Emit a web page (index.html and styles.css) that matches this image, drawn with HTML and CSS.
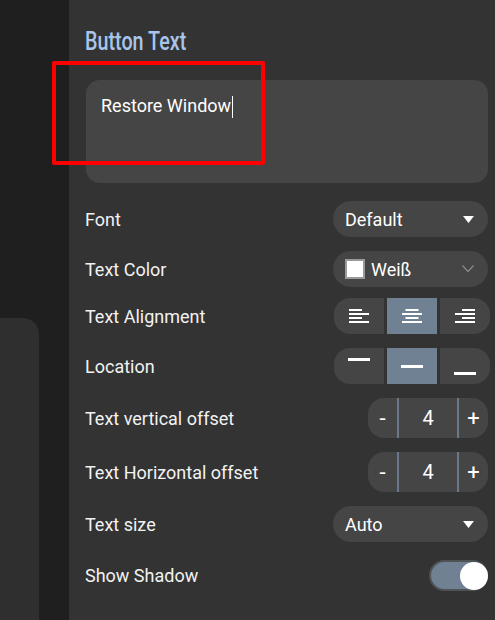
FILE: index.html
```html
<!DOCTYPE html>
<html>
<head>
<meta charset="utf-8">
<link rel="stylesheet" href="styles.css">
</head>
<body>
<div class="app">
  <aside class="sidebar">
    <div class="side-card"></div>
  </aside>
  <main class="panel">
    <h1 class="title"><span class="title-text">Button Text</span></h1>
    <div class="textarea"><span class="value">Restore Window</span><span class="caret"></span></div>

    <div class="rows">
      <div class="row r-font">
        <span class="label">Font</span>
        <div class="select">
          <span>Default</span>
          <svg class="tri" width="11" height="7" viewBox="0 0 11 7"><path d="M0 0H11L5.5 7Z" fill="#fff"/></svg>
        </div>
      </div>

      <div class="row r-color">
        <span class="label">Text Color</span>
        <div class="select">
          <span class="swatch"></span>
          <span class="sel-text">Weiß</span>
          <svg class="chev" width="12" height="8" viewBox="0 0 12 8"><path d="M0.5 0.5L6 6.5L11.5 0.5" fill="none" stroke="#8a8a8a" stroke-width="1.2"/></svg>
        </div>
      </div>

      <div class="row r-align">
        <span class="label">Text Alignment</span>
        <div class="seg">
          <div class="seg-item">
            <svg width="20" height="16" viewBox="0 0 20 16"><g fill="#fff"><rect x="0" y="1" width="13" height="2"/><rect x="0" y="5" width="20" height="2"/><rect x="0" y="9" width="13" height="2"/><rect x="0" y="13" width="20" height="2"/></g></svg>
          </div>
          <div class="seg-item active">
            <svg width="20" height="16" viewBox="0 0 20 16"><g fill="#fff"><rect x="3.5" y="1" width="13" height="2"/><rect x="0" y="5" width="20" height="2"/><rect x="3.5" y="9" width="13" height="2"/><rect x="0" y="13" width="20" height="2"/></g></svg>
          </div>
          <div class="seg-item">
            <svg width="20" height="16" viewBox="0 0 20 16"><g fill="#fff"><rect x="7" y="1" width="13" height="2"/><rect x="0" y="5" width="20" height="2"/><rect x="7" y="9" width="13" height="2"/><rect x="0" y="13" width="20" height="2"/></g></svg>
          </div>
        </div>
      </div>

      <div class="row r-loc">
        <span class="label">Location</span>
        <div class="seg">
          <div class="seg-item">
            <svg width="22" height="20" viewBox="0 0 22 20"><rect x="0" y="2" width="22" height="3" fill="#fff"/></svg>
          </div>
          <div class="seg-item active">
            <svg width="22" height="20" viewBox="0 0 22 20"><rect x="0" y="9" width="22" height="3" fill="#fff"/></svg>
          </div>
          <div class="seg-item">
            <svg width="22" height="20" viewBox="0 0 22 20"><rect x="0" y="16" width="22" height="3" fill="#fff"/></svg>
          </div>
        </div>
      </div>

      <div class="row r-step">
        <span class="label">Text vertical offset</span>
        <div class="stepper">
          <span class="step-btn">-</span>
          <span class="step-val">4</span>
          <span class="step-btn">+</span>
        </div>
      </div>

      <div class="row r-step">
        <span class="label">Text Horizontal offset</span>
        <div class="stepper">
          <span class="step-btn">-</span>
          <span class="step-val">4</span>
          <span class="step-btn">+</span>
        </div>
      </div>

      <div class="row r-size">
        <span class="label">Text size</span>
        <div class="select">
          <span>Auto</span>
          <svg class="tri" width="11" height="7" viewBox="0 0 11 7"><path d="M0 0H11L5.5 7Z" fill="#fff"/></svg>
        </div>
      </div>

      <div class="row r-shadow">
        <span class="label">Show Shadow</span>
        <div class="toggle"><span class="knob"></span></div>
      </div>
    </div>
  </main>
  <div class="highlight"></div>
</div>
</body>
</html>
```

FILE: styles.css
```css
* { box-sizing: border-box; }
html, body {
  margin: 0;
  padding: 0;
  background: #333333;
  height: 100%;
  overflow: hidden;
}
.app {
  position: relative;
  display: flex;
  width: 495px;
  height: 620px;
  font-family: Roboto, "Noto Sans", sans-serif;
  color: #f2f2f2;
}
.sidebar {
  width: 69px;
  flex: none;
  background: #1f1f1f;
  padding-top: 318px;
  display: flex;
  flex-direction: column;
}
.side-card {
  width: 39px;
  flex: 1;
  background: #2f2f2f;
  border-top-right-radius: 16px;
}
.panel {
  flex: 1;
  background: #333333;
  padding: 0 7px 0 16px;
}
.title {
  margin: 0;
  padding-top: 26px;
  height: 80px;
  font-family: Roboto, "Noto Sans", sans-serif;
  font-weight: 500;
  font-size: 26px;
  line-height: 30px;
  color: #a8c5ea;
}
.title-text {
  display: inline-block;
  transform: scaleX(0.76);
  transform-origin: left center;
  white-space: nowrap;
}
.textarea {
  margin-left: 1px;
  height: 103px;
  background: #454545;
  border-radius: 14px;
  padding: 14px 15px;
  font-size: 18px;
  line-height: 24px;
  color: #ffffff;
  display: flex;
  align-items: flex-start;
}
.caret {
  display: inline-block;
  width: 1px;
  height: 22px;
  margin-top: 2px;
  margin-left: 1px;
  background: #ffffff;
}
.rows {
  display: flex;
  flex-direction: column;
  padding-top: 18px;
}
.row {
  display: flex;
  align-items: center;
  justify-content: space-between;
}
.label {
  font-size: 18px;
  color: #f2f2f2;
}
.r-font { height: 36px; }
.r-color { height: 36px; margin-top: 14px; }
.r-align { height: 36px; margin-top: 11px; }
.r-loc { height: 36px; margin-top: 14px; }
.r-step { height: 40px; margin-top: 14px; }
.r-size { height: 36px; margin-top: 14px; }
.r-shadow { height: 31px; margin-top: 18px; }

.select {
  width: 155px;
  height: 36px;
  background: #454545;
  border-radius: 18px;
  display: flex;
  align-items: center;
  padding: 0 14px 0 12px;
  font-size: 18px;
  color: #ffffff;
}
.select > span:first-child { flex: 1; }
.select .swatch {
  flex: none !important;
  width: 20px;
  height: 20px;
  background: #ffffff;
  border: 2px solid #9a9a9a;
  margin-right: 6px;
}
.sel-text { flex: 1; }
.tri { flex: none; }
.chev { flex: none; }

.seg {
  width: 156px;
  height: 36px;
  margin-right: -2px;
  display: flex;
  gap: 3px;
}
.seg-item {
  flex: 1;
  background: #454545;
  display: flex;
  align-items: center;
  justify-content: center;
}
.seg-item:first-child { border-radius: 16px 0 0 16px; }
.seg-item:last-child { border-radius: 0 16px 16px 0; }
.seg-item.active { background: #6f8193; }

.stepper {
  width: 120px;
  height: 40px;
  background: #454545;
  border-radius: 16px;
  display: flex;
  align-items: center;
  font-size: 20px;
  color: #ffffff;
}
.step-btn {
  width: 29px;
  text-align: center;
  font-size: 22px;
}
.step-val {
  flex: 1;
  height: 40px;
  line-height: 40px;
  text-align: center;
  border-left: 2px solid #6a7a8b;
  border-right: 2px solid #6a7a8b;
}

.toggle {
  width: 59px;
  height: 31px;
  border-radius: 16px;
  background: #6f8193;
  border: 2px solid #4f5356;
  display: flex;
  align-items: center;
  justify-content: flex-end;
}
.knob {
  width: 28px;
  height: 28px;
  border-radius: 50%;
  background: #ffffff;
  margin-right: -2px;
}

.highlight {
  position: absolute;
  left: 52px;
  top: 61px;
  width: 213px;
  height: 104px;
  border: 4px solid #ff0000;
  border-radius: 2px;
  pointer-events: none;
}
```
